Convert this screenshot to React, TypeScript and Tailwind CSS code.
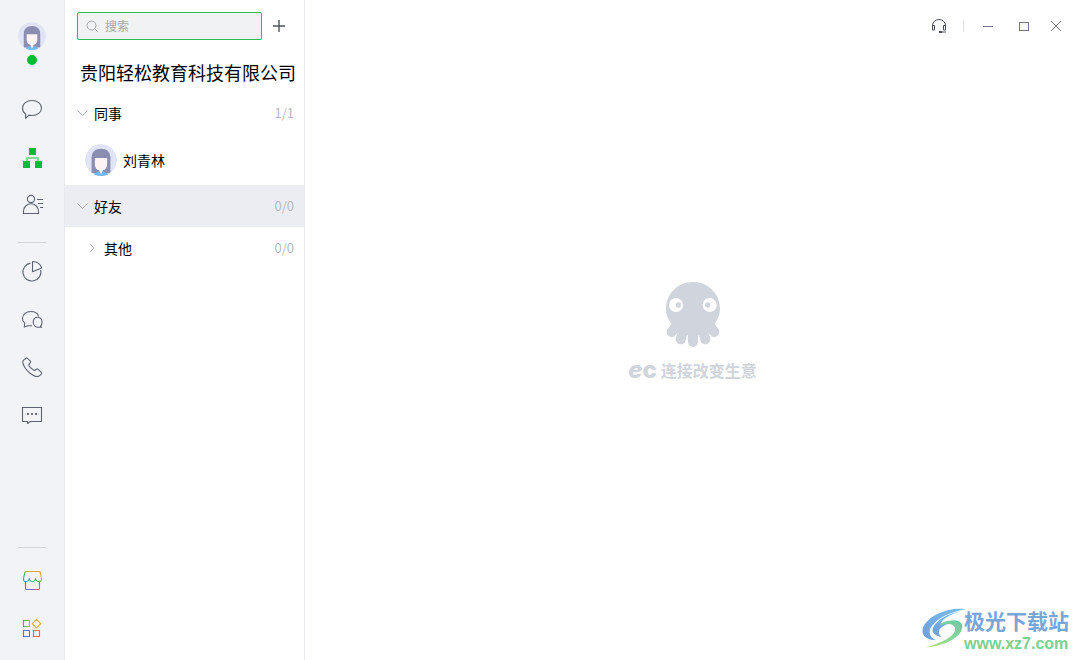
import React from 'react';

// ----------------------------------------------------------------------
// 1. アイコン
// ----------------------------------------------------------------------

interface IconProps {
  children: React.ReactNode;
}

// サイドバー共通の24pxアイコン枠
const Icon: React.FC<IconProps> = ({ children }) => (
  <svg
    className="h-6 w-6"
    viewBox="0 0 24 24"
    fill="none"
    stroke="#5d6470"
    strokeWidth="1.1"
    strokeLinejoin="round"
    aria-hidden="true"
  >
    {children}
  </svg>
);

const ChatIcon = () => (
  <Icon>
    <path d="M5.6 21.3V17C3.6 15.6 2.5 13.4 2.5 11c0-4.3 4.2-7.5 9.5-7.5s9.5 3.2 9.5 7.5-4.2 7.5-9.5 7.5c-1.1 0-2.2-.1-3.2-.4z" />
  </Icon>
);

const OrgIcon = () => (
  <Icon>
    <path d="M7 16v-3h11v3" stroke="#80db99" strokeWidth="2" />
    <path d="M9 3h7v7H9zM3 16h7v7H3zM15 16h7v7h-7z" fill="#00bb34" stroke="none" />
  </Icon>
);

const ContactIcon = () => (
  <Icon>
    <circle cx="11" cy="6" r="3.6" />
    <path d="M3.5 20.5v-2.2a7.5 7.5 0 0 1 15 0v2.2z" />
    <path d="M17 6.5h6M18 10.5h5M20 14.5h3" />
  </Icon>
);

const PieIcon = () => (
  <Icon>
    <path d="M10.5 4.1A9 9 0 1 0 20.7 11" />
    <path d="M12.5 2.5v10.2l9.2-3.7a9.6 9.6 0 0 0-9.2-6.5z" />
  </Icon>
);

const GroupChatIcon = () => (
  <Icon>
    <path d="M12 18.8H8.2L4.2 20l.6-3.8C3.2 14.8 2.5 13.2 2.5 11.5c0-4.2 3.8-7 8.3-7 3.8 0 6.8 1.8 7.8 4.7" />
    <path d="M20.6 19.2l1 1.1h-3.4c-2.8 0-5-2-5-5 0-3.1 1.8-5.1 4.4-5.1s4.4 2 4.4 5.1c0 1.6-.5 3-1.4 3.9z" />
  </Icon>
);

const PhoneIcon = () => (
  <Icon>
    <path d="M6 3.2 3.3 5.4C.9 9.3 7.6 16.4 9.7 18c2.9 2.3 7.5 4.8 10.2 2.5l1.5-1.7c.4-.6.3-1.1-.2-1.6l-3-2.9c-.6-.5-1.2-.5-1.8-.1l-1.7 1.3c-2-.5-5.6-3.8-6-5.7l1.6-2.1c.4-.5.4-1 .1-1.6L7.4 3.4C7 2.8 6.5 2.8 6 3.2z" />
  </Icon>
);

const SmsIcon = () => (
  <Icon>
    <path d="M2.5 4.5h19v14h-11l-3 2v-2h-5z" />
    <path d="M7 10h2v2H7zM11 10h2v2h-2zM15 10h2v2h-2z" fill="#70757f" stroke="none" />
  </Icon>
);

const ShopIcon = () => (
  <Icon>
    <defs>
      <linearGradient id="roof" x1="0" x2="1" y1="1" y2="0">
        <stop offset="0" stopColor="#19a5ec" />
        <stop offset="0.4" stopColor="#41b652" />
        <stop offset="0.65" stopColor="#c8b832" />
        <stop offset="1" stopColor="#f29a38" />
      </linearGradient>
      <linearGradient id="store">
        <stop offset="0" stopColor="#4779ed" />
        <stop offset="0.5" stopColor="#8a5cc4" />
        <stop offset="1" stopColor="#ef693c" />
      </linearGradient>
    </defs>
    <path d="M5.5 13.5v7q0 1 1 1h12q1 0 1-1v-7" stroke="url(#store)" />
    <path
      d="M6 3.5h13q1 0 1.2 1l1.3 6c.7 4-5.4 4.2-5.9-.3-.5 4.4-5.9 4.4-6.4 0-.5 4.5-6.4 4.3-5.7.3l1.3-6q.2-1 1.2-1z"
      stroke="url(#roof)"
    />
  </Icon>
);

const AppsIcon = () => (
  <Icon>
    <defs>
      <linearGradient id="appsWarm">
        <stop offset="0" stopColor="#41b649" />
        <stop offset="1" stopColor="#a6b932" />
      </linearGradient>
      <linearGradient id="appsCool">
        <stop offset="0" stopColor="#477bea" />
        <stop offset="1" stopColor="#7965cf" />
      </linearGradient>
    </defs>
    <path d="M3.5 4.5h6v6h-6z" stroke="url(#appsWarm)" />
    <path d="M16.5 3.4l4.2 4.2-4.2 4.2-4.2-4.2z" stroke="#e4aa37" />
    <path d="M3.5 14.5h6v6h-6z" stroke="url(#appsCool)" />
    <path d="M13.5 14.5h6v6h-6z" stroke="#ee6945" />
  </Icon>
);

const Avatar: React.FC<{ className: string }> = ({ className }) => (
  <svg className={`rounded-full ${className}`} viewBox="0 0 34 34" aria-hidden="true">
    <circle cx="17" cy="17" r="17" fill="#e0e4f6" />
    <path d="M7 31V14.5C7 8.5 11 5 17 5s10 3.5 10 9.5V31z" fill="#8b8db1" />
    <path d="M9 34c.3-3 3-4.2 6-4.5h4c3 .3 5.7 1.5 6 4.5z" fill="#72b7f7" />
    <path d="M10.5 15h13v7c0 3-2 5.5-4.5 6L17 32.5 15 28c-2.5-.5-4.5-3-4.5-6z" fill="#fdf2f4" />
  </svg>
);

const Chevron: React.FC<{ open: boolean }> = ({ open }) => (
  <svg className="h-3 w-3 shrink-0" viewBox="0 0 12 12" fill="none" stroke="#a9acbb" aria-hidden="true">
    <path d={open ? 'M.5 3.5l5 5 5-5' : 'M3 2l4 4-4 4'} />
  </svg>
);

const Octopus = () => (
  <svg className="h-[66px] w-[54px]" viewBox="0 0 162 198" aria-hidden="true">
    <path
      d="M81 0c46 0 81 36 81 81 0 17-6 31-15 42v12l-24 19-42 10-42-10-24-19v-12C6 112 0 98 0 81 0 36 35 0 81 0z"
      fill="#d0d4dc"
    />
    <path
      d="M81 120v60M54 135l-10 37M108 135l10 37M30 132l-13 18M132 132l13 18"
      stroke="#d0d4dc"
      strokeWidth="30"
      strokeLinecap="round"
    />
    <circle cx="30" cy="69" r="21" fill="#fff" />
    <circle cx="131" cy="69" r="21" fill="#fff" />
    <circle cx="37" cy="69" r="8" fill="#d0d4dc" />
    <circle cx="125" cy="69" r="8" fill="#d0d4dc" />
  </svg>
);

const Swirl = () => (
  <svg className="-mr-0.5 h-10 w-11" viewBox="0 0 133 120" aria-hidden="true">
    <defs>
      <linearGradient id="swirlBlue" x1="0" x2="1" y1="1" y2="0">
        <stop offset="0" stopColor="#6f9edb" />
        <stop offset="1" stopColor="#78c0ed" />
      </linearGradient>
      <linearGradient id="swirlGreen" x1="1" x2="0" y1="0" y2="1">
        <stop offset="0" stopColor="#64ccaa" />
        <stop offset="1" stopColor="#b5df83" />
      </linearGradient>
    </defs>
    <path d="M133 3C82-4 22 20 4 56c-9 23 6 41 38 41C16 85 18 62 39 43 62 21 98 9 133 3z" fill="url(#swirlBlue)" />
    <path d="M123 8C88 14 44 32 33 60c-5 15 8 25 27 27-12-8-12-20 0-30 14-11 34-14 40-4C94 29 59 46 55 46c12-18 42-32 68-38z" fill="url(#swirlBlue)" />
    <path d="M78 39c34-9 52 7 41 29-14 29-61 46-107 51 42-13 79-28 87-49 5-16-8-24-28-22-8 1-14 3-20 6 6-7 16-12 27-15z" fill="url(#swirlGreen)" />
  </svg>
);

// ----------------------------------------------------------------------
// 2. データ
// ----------------------------------------------------------------------

interface NavItem {
  label: string;
  icon: React.FC;
}

const mainNav: NavItem[] = [
  { label: '消息', icon: ChatIcon },
  { label: '组织架构', icon: OrgIcon },
  { label: '客户', icon: ContactIcon },
];

const toolNav: NavItem[] = [
  { label: '统计', icon: PieIcon },
  { label: '会话', icon: GroupChatIcon },
  { label: '电话', icon: PhoneIcon },
  { label: '短信', icon: SmsIcon },
];

const bottomNav: NavItem[] = [
  { label: '商城', icon: ShopIcon },
  { label: '应用', icon: AppsIcon },
];

// ----------------------------------------------------------------------
// 3. 各エリアのコンポーネント
// ----------------------------------------------------------------------

const NavGroup: React.FC<{ items: NavItem[] }> = ({ items }) => (
  <div className="flex w-full flex-col">
    {items.map(({ label, icon: ItemIcon }) => (
      <button key={label} type="button" aria-label={label} className="flex h-12 items-center justify-center">
        <ItemIcon />
      </button>
    ))}
  </div>
);

const Sidebar = () => (
  <nav className="flex w-[65px] shrink-0 flex-col items-center border-r border-[#e8e9ee] bg-[#f2f3f7] pt-[22px] pb-2">
    <button type="button" aria-label="个人资料" className="flex flex-col items-center gap-[5px]">
      <Avatar className="h-7 w-7" />
      <span className="h-2.5 w-2.5 rounded-full bg-[#00bb34]" />
    </button>
    <div className="mt-5 w-full">
      <NavGroup items={mainNav} />
    </div>
    <div className="mt-[13px] mb-1 h-px w-7 bg-[#d3d5da]" />
    <NavGroup items={toolNav} />
    <div className="mt-auto mb-2 h-px w-7 bg-[#d3d5da]" />
    <NavGroup items={bottomNav} />
  </nav>
);

interface GroupRowProps {
  name: string;
  count: string;
  open: boolean;
  className: string;
}

const GroupRow: React.FC<GroupRowProps> = ({ name, count, open, className }) => (
  <button
    type="button"
    aria-expanded={open}
    className={`flex h-[42px] w-full items-center gap-[5px] pr-2.5 text-left ${className}`}
  >
    <Chevron open={open} />
    <span className="flex-1 text-sm">{name}</span>
    <span className="text-[13px] text-[#b8babf]">{count}</span>
  </button>
);

const ContactPanel = () => (
  <aside className="flex w-60 shrink-0 flex-col border-r border-[#e8e9ee] text-black">
    <div className="flex items-center pt-3 pl-3">
      <label className="flex h-7 w-[185px] items-center gap-[7px] rounded-xs border border-[#27bd56] bg-[#f0f2f4] px-2">
        <svg className="h-3 w-3 shrink-0" viewBox="0 0 12 12" fill="none" stroke="#a3a6ab" aria-hidden="true">
          <circle cx="5.5" cy="5.5" r="4.5" />
          <path d="M9 9l2.5 2.5" />
        </svg>
        <input
          type="text"
          aria-label="搜索"
          placeholder="搜索"
          className="w-full min-w-0 bg-transparent text-xs outline-none placeholder:text-[#a6a8ac]"
        />
      </label>
      <button type="button" aria-label="添加" className="ml-2.5 flex h-7 w-3.5 items-center justify-center">
        <svg className="h-3.5 w-3.5 shrink-0" viewBox="0 0 14 14" stroke="#50545c" strokeWidth="1.4" aria-hidden="true">
          <path d="M7 1v12M1 7h12" />
        </svg>
      </button>
    </div>

    <h1 className="mt-[13px] h-[39px] pl-[15px] text-lg leading-[39px] whitespace-nowrap">
      贵阳轻松教育科技有限公司
    </h1>

    <GroupRow name="同事" count="1/1" open={true} className="pl-3" />
    <button type="button" className="flex h-[51px] w-full items-center gap-1.5 pl-5 text-left text-sm">
      <Avatar className="h-8 w-8" />
      刘青林
    </button>
    <GroupRow name="好友" count="0/0" open={true} className="bg-[#ecedf2] pl-3" />
    <GroupRow name="其他" count="0/0" open={false} className="pl-[22px]" />
  </aside>
);

const TitleBar = () => (
  <header className="flex h-[52px] shrink-0 items-center justify-end pr-2.5">
    <button type="button" aria-label="客服" className="mr-2.5 flex h-7 w-7 items-center justify-center">
      <svg className="h-4 w-4" viewBox="0 0 16 16" fill="none" stroke="#474b55" aria-hidden="true">
        <path d="M1.5 8v-.5a6.500 6 0 0 1 13 0V8" />
        <path d="M1.5 7.5h2V12h-2zM12.5 7.5h2V12h-2z" />
        <path d="M8 14h3" strokeWidth="2" />
        <path d="M11 14h4" stroke="#a5a7ad" strokeWidth="2" />
      </svg>
    </button>
    <div className="mr-1.5 h-3 w-px bg-[#dedfe3]" />
    <button type="button" aria-label="最小化" className="flex h-7 w-9 items-center justify-center">
      <span className="h-px w-2.5 bg-[#74738c]" />
    </button>
    <button type="button" aria-label="最大化" className="flex h-7 w-9 items-center justify-center">
      <span className="h-[9px] w-2.5 border border-[#74738c]" />
    </button>
    <button type="button" aria-label="关闭" className="flex h-7 w-7 items-center justify-center">
      <svg className="h-3 w-3" viewBox="0 0 12 12" stroke="#74738c" aria-hidden="true">
        <path d="M1 1l10 10M11 1L1 11" />
      </svg>
    </button>
  </header>
);

const App: React.FC = () => {
  return (
    <div className="relative flex h-screen w-full overflow-hidden bg-white font-['Noto_Sans_CJK_SC',sans-serif]">
      <Sidebar />
      <ContactPanel />

      <main className="flex min-w-0 flex-1 flex-col">
        <TitleBar />
        <div className="flex flex-1 flex-col items-center justify-center pb-12">
          <Octopus />
          <p className="mt-2.5 flex items-center gap-1 text-base leading-6 font-bold text-[#d0d4dc]">
            <span className="font-['Inter',sans-serif] text-2xl leading-6 font-extrabold">
              <i>e</i>c
            </span>
            连接改变生意
          </p>
        </div>
      </main>

      {/* 右下のロゴ */}
      <div className="absolute right-[11px] bottom-1 flex items-start">
        <Swirl />
        <div className="flex flex-col whitespace-nowrap">
          <span className="text-[21px] leading-6 font-bold text-[#78a6d9]">极光下载站</span>
          <span className="font-['Liberation_Sans',sans-serif] text-base leading-6 font-bold text-[#7bd092]">
            www.xz7.com
          </span>
        </div>
      </div>
    </div>
  );
};

export default App;
